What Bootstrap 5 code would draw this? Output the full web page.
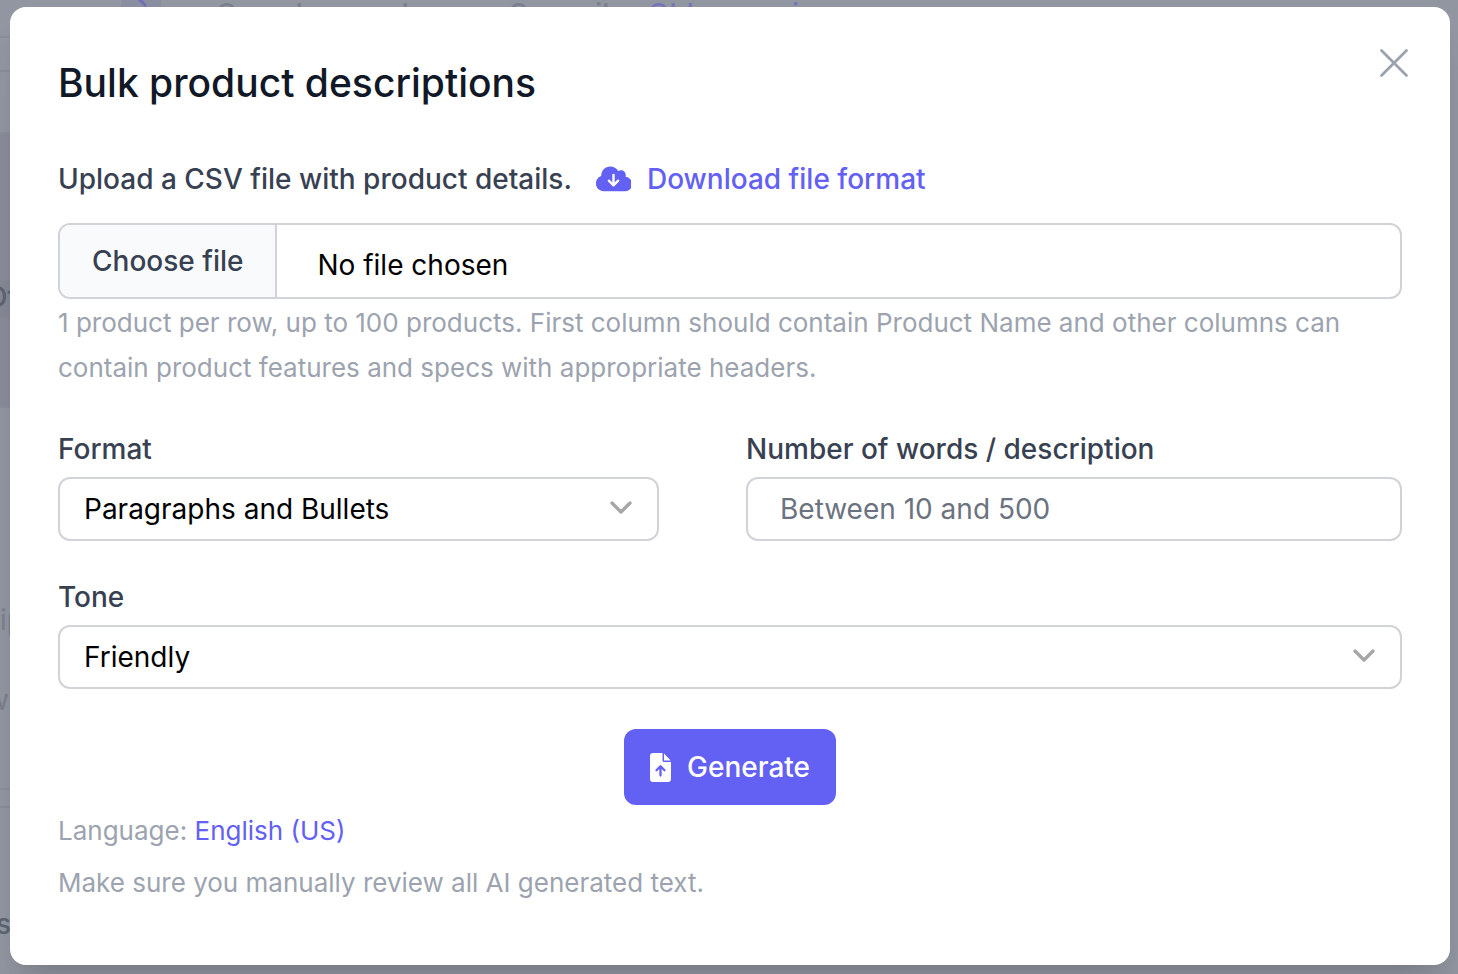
<!DOCTYPE html>
<html lang="en">
<head>
<meta charset="utf-8">
<meta name="viewport" content="width=device-width, initial-scale=1">
<title>Bulk product descriptions</title>
<link href="https://cdn.jsdelivr.net/npm/bootstrap@5.3.0/dist/css/bootstrap.min.css" rel="stylesheet">
<style>
  :root { --accent: #6360f4; --ink: #374151; --line: #d1d3d8; --soft: #9ca3af; }
  body { font-family: Inter, "Liberation Sans", sans-serif; font-size: 28px; line-height: 40px; color: var(--ink); background: #9196a1; min-height: 100vh; }
  a { color: var(--accent); text-decoration: none; }
  /* dimmed page that lies under the dialog */
  .backdrop-page { position: absolute; inset: 0; overflow: hidden; z-index: 0; color: #7b808c; font-weight: 500; }
  .backdrop-page span, .backdrop-page svg { position: absolute; white-space: nowrap; }
  .backdrop-page .tint { background: #8b8c9b; left: 0; width: 50%; top: 133px; height: 274px; }
  .backdrop-page .tint-row { background: #868896; left: 0; width: 50%; top: 280px; height: 38px; }
  .backdrop-page .tile { background: #8b8ea0; left: 121px; top: 0; width: 40px; height: 20px; }
  .backdrop-page .rule { left: 0; width: 50%; height: 2px; background: #8a8e9a; }
  .backdrop-page .tab { top: -6px; }
  .backdrop-page .dark { color: #5d6472; }
  .backdrop-page .thin { font-weight: 400; }
  .dialog-wrap { position: relative; z-index: 1; padding: 7px 8px 9px 10px; }
  .dialog-box { border: 0; border-radius: 16px; padding: 52px 48px 56px; color: var(--ink); background: #fff; box-shadow: 0 40px 50px -10px rgba(0,0,0,.1), 0 16px 20px -12px rgba(0,0,0,.1); }
  .dialog-title { font-size: 39px; line-height: 48px; font-weight: 500; color: #111827; margin: 0 0 52px; }
  .close-x { position: absolute; top: 36px; right: 36px; width: 40px; height: 40px; border: 0; padding: 0; background: none; color: var(--soft); display: flex; }
  .field-label { font-weight: 500; margin: 0 0 8px; display: block; }
  .upload-row { margin-bottom: 24px; font-weight: 500; }
  .boxed, .boxed:focus { border: 2px solid var(--line); border-radius: 12px; font-size: 28px; line-height: 40px; color: #000; background-color: #fff; }
  .file-box { height: 76px; padding: 0; overflow: hidden; cursor: pointer; }
  .file-button { background: #f9fafb; border-right: 2px solid var(--line); color: var(--ink); font-weight: 500; padding: 16px 32px; }
  .file-name { padding: 20px 40px 12px; }
  .helper { font-size: 26px; line-height: 45px; color: var(--soft); margin: 1px 0 39px; }
  .fields { display: grid; grid-template-columns: 601fr 656fr; column-gap: 87px; margin-bottom: 36px; }
  .pick { height: 64px; padding: 10px 72px 10px 24px; background-size: 24px 16px; background-position: right 24px top 21px;
    background-image: url("data:image/svg+xml,%3Csvg xmlns='http://www.w3.org/2000/svg' viewBox='0 0 24 16'%3E%3Cpath d='M3 3l9 9 9-9' fill='none' stroke='%23a6a6a6' stroke-width='3.4' stroke-linecap='round' stroke-linejoin='round'/%3E%3C/svg%3E"); }
  .count { height: 64px; padding: 10px 32px; }
  .count::placeholder { color: #6b7280; opacity: 1; }
  .generate, .generate:hover { height: 76px; border-radius: 12px; background: var(--accent); border: 0; color: #fff; font-size: 28px; line-height: 40px; font-weight: 500; padding: 0 26px; margin-top: 40px; }
  .foot { font-size: 26px; line-height: 52px; color: var(--soft); margin: 0; }
</style>
</head>
<body>
<div class="backdrop-page" aria-hidden="true">
  <span class="tint"></span><span class="tint-row"></span><span class="tile"></span>
  <svg style="left:130px;top:0" width="24" height="8"><path d="M8-2l8 8" stroke="#706fb5" stroke-width="3"/></svg>
  <span class="rule" style="top:36px"></span><span class="rule" style="top:70px"></span><span class="rule" style="top:132px"></span>
  <span class="rule" style="top:406px"></span><span class="rule" style="top:788px"></span><span class="rule" style="top:806px"></span>
  <span class="tab" style="left:216px">Complex words</span>
  <span class="tab" style="left:508px">Council</span>
  <span class="tab" style="left:648px;color:#7774b8">Old campaign</span>
  <span class="dark" style="left:-14px;top:277px">Of</span>
  <span class="thin" style="left:0;top:600px">ip</span>
  <span class="thin" style="left:-14px;top:680px">wi</span>
  <span class="dark" style="left:-4px;top:904px">s</span>
</div>
<main class="dialog-wrap">
  <section class="modal-content dialog-box" role="dialog" aria-labelledby="dialogTitle">
    <button type="button" class="close-x" aria-label="Close">
      <svg width="40" height="40" viewBox="0 0 40 40" fill="none" stroke="currentColor" stroke-width="2.8" stroke-linecap="round"><path d="M7.500 7.500l25 25M32.500 7.500l-25 25"/></svg>
    </button>
    <h1 class="dialog-title" id="dialogTitle">Bulk product descriptions</h1>
    <form>
      <div class="upload-row d-flex flex-wrap align-items-center">
        <label for="csv" class="me-4">Upload a CSV file with product details.</label>
        <a href="#" class="d-flex align-items-center gap-3">
          <svg width="35" height="26" viewBox="0 0 35 26" aria-hidden="true"><path fill="currentColor" d="M8 25.300A7.800 7.800 0 0 1 5.200 10.100C5.200 4.500 9.200.6 14.200.6c3.500 0 6.300 1.700 7.900 4.300 4.500-2 8.600 1.200 7.500 5.800A7.300 7.300 0 0 1 28 25.300Z"/><path d="M17.500 9v10M12.900 14.700l4.600 4.600 4.600-4.600" fill="none" stroke="#fff" stroke-width="2.400" stroke-linecap="round" stroke-linejoin="round"/></svg>
          <span>Download file format</span>
        </a>
      </div>
      <label class="form-control boxed file-box d-flex" for="csv">
        <span class="file-button">Choose file</span>
        <span class="file-name">No file chosen</span>
      </label>
      <input type="file" id="csv" accept=".csv" class="visually-hidden">
      <p class="helper">1 product per row, up to 100 products. First column should contain Product Name and other columns can contain product features and specs with appropriate headers.</p>
      <div class="fields">
        <div>
          <label class="field-label" for="format">Format</label>
          <select id="format" class="form-select boxed pick"><option>Paragraphs and Bullets</option></select>
        </div>
        <div>
          <label class="field-label" for="words">Number of words / description</label>
          <input id="words" type="text" inputmode="numeric" class="form-control boxed count" placeholder="Between 10 and 500">
        </div>
      </div>
      <label class="field-label" for="tone">Tone</label>
      <select id="tone" class="form-select boxed pick"><option>Friendly</option></select>
      <div class="text-center">
        <button type="button" class="btn generate d-inline-flex align-items-center gap-3">
          <svg width="21" height="29" viewBox="0 0 21 29" aria-hidden="true"><path fill="#fff" d="M3 0h9.500v7.500a1.500 1.500 0 0 0 1.500 1.500H21v17a3 3 0 0 1-3 3H3a3 3 0 0 1-3-3V3a3 3 0 0 1 3-3ZM14 .4 20.700 7.400H14Z"/><path d="M10.500 22.500v-9M6.500 17.200l4-4 4 4" fill="none" stroke="#6360f4" stroke-width="2.300" stroke-linecap="round" stroke-linejoin="round"/></svg>
          <span>Generate</span>
        </button>
      </div>
      <p class="foot">Language: <a href="#">English (US)</a></p>
      <p class="foot">Make sure you manually review all AI generated text.</p>
    </form>
  </section>
</main>
<script src="https://cdn.jsdelivr.net/npm/bootstrap@5.3.0/dist/js/bootstrap.bundle.min.js"></script>
</body>
</html>
